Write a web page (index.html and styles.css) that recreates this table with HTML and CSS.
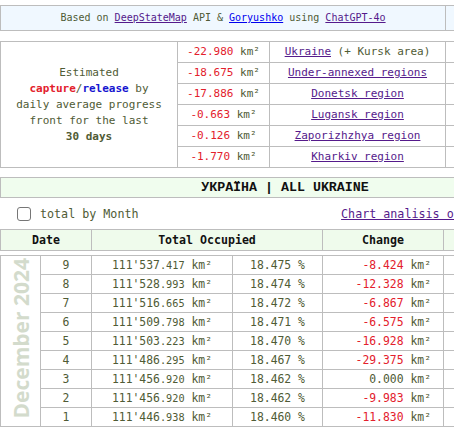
FILE: index.html
```html
<!DOCTYPE html>
<html lang="en">
<head>
<meta charset="utf-8">
<title>DeepStateMap progress</title>
<link rel="stylesheet" href="styles.css">
</head>
<body>
<div class="page">
  <table class="banner">
    <colgroup><col class="c-credit"><col></colgroup>
    <tr>
      <td class="credit">Based on <a class="visited" href="#">DeepStateMap</a> API &amp; <a class="fresh" href="#">Goryushko</a> using <a class="visited" href="#">ChatGPT-4o</a></td>
      <td></td>
    </tr>
  </table>

  <table class="summary">
    <colgroup><col class="c-desc"><col class="c-val"><col class="c-region"><col></colgroup>
    <tr>
      <td class="desc" rowspan="6">Estimated<br><b class="red">capture</b>/<b class="blue">release</b> by<br>daily average progress<br>front for the last<br><b>30 days</b></td>
      <td class="val"><span class="red">-22.980</span> km²</td>
      <td class="region"><a class="visited" href="#">Ukraine</a> (+ Kursk area)</td>
      <td></td>
    </tr>
    <tr><td class="val"><span class="red">-18.675</span> km²</td><td class="region"><a class="visited" href="#">Under-annexed regions</a></td><td></td></tr>
    <tr><td class="val"><span class="red">-17.886</span> km²</td><td class="region"><a class="visited" href="#">Donetsk region</a></td><td></td></tr>
    <tr><td class="val"><span class="red">-0.663</span> km²</td><td class="region"><a class="visited" href="#">Lugansk region</a></td><td></td></tr>
    <tr><td class="val"><span class="red">-0.126</span> km²</td><td class="region"><a class="visited" href="#">Zaporizhzhya region</a></td><td></td></tr>
    <tr><td class="val"><span class="red">-1.770</span> km²</td><td class="region"><a class="visited" href="#">Kharkiv region</a></td><td></td></tr>
  </table>

  <div class="title">УКРАЇНА | ALL UKRAINE</div>

  <div class="controls">
    <label class="toggle"><input type="checkbox" class="box"> total by Month</label>
    <a class="visited chart" href="#">Chart analisis of changes</a>
  </div>

  <table class="head">
    <colgroup><col class="c-date"><col class="c-total"><col class="c-change"><col></colgroup>
    <tr><th>Date</th><th>Total Occupied</th><th>Change</th><th></th></tr>
  </table>

  <table class="data">
    <colgroup><col class="c-month"><col class="c-day"><col class="c-km"><col class="c-pct"><col class="c-change"><col></colgroup>
    <tr>
      <td class="month" rowspan="9"><span>December 2024</span></td>
      <td class="day">9</td><td class="km">111'537<small>.417</small> km²</td><td class="pct">18.475 %</td><td class="chg"><span class="red">-8.424</span> km²</td><td></td>
    </tr>
    <tr><td class="day">8</td><td class="km">111'528<small>.993</small> km²</td><td class="pct">18.474 %</td><td class="chg"><span class="red">-12.328</span> km²</td><td></td></tr>
    <tr><td class="day">7</td><td class="km">111'516<small>.665</small> km²</td><td class="pct">18.472 %</td><td class="chg"><span class="red">-6.867</span> km²</td><td></td></tr>
    <tr><td class="day">6</td><td class="km">111'509<small>.798</small> km²</td><td class="pct">18.471 %</td><td class="chg"><span class="red">-6.575</span> km²</td><td></td></tr>
    <tr><td class="day">5</td><td class="km">111'503<small>.223</small> km²</td><td class="pct">18.470 %</td><td class="chg"><span class="red">-16.928</span> km²</td><td></td></tr>
    <tr><td class="day">4</td><td class="km">111'486<small>.295</small> km²</td><td class="pct">18.467 %</td><td class="chg"><span class="red">-29.375</span> km²</td><td></td></tr>
    <tr><td class="day">3</td><td class="km">111'456<small>.920</small> km²</td><td class="pct">18.462 %</td><td class="chg">0.000 km²</td><td></td></tr>
    <tr><td class="day">2</td><td class="km">111'456<small>.920</small> km²</td><td class="pct">18.462 %</td><td class="chg"><span class="red">-9.983</span> km²</td><td></td></tr>
    <tr><td class="day">1</td><td class="km">111'446<small>.938</small> km²</td><td class="pct">18.460 %</td><td class="chg"><span class="red">-11.830</span> km²</td><td></td></tr>
  </table>
</div>
</body>
</html>
```

FILE: styles.css
```css
html, body {
  overflow: hidden;
}
body {
  margin: 0;
  padding-top: 5px;
  font-family: "DejaVu Sans Mono", monospace;
  color: #4f5b35;
  background: #fff;
}
.page {
  width: 570px;
}
table {
  border-collapse: collapse;
  table-layout: fixed;
  width: 570px;
}
td, th {
  border: 1px solid #bdbdbd;
  padding: 0;
}
a.visited { color: #551a8b; }
a.fresh { color: #0000ee; }
.red { color: #e3202c; }
.blue { color: #1515d0; }

/* banner */
.banner { background: #f0f8ff; }
.c-credit { width: 445px; }
.credit {
  font-size: 10px;
  line-height: 24px;
  text-align: center;
}

/* summary */
.summary { margin-top: 10px; }
.c-desc { width: 177px; }
.c-val { width: 92px; }
.c-region { width: 176px; }
.summary td {
  font-size: 11px;
  line-height: 20px;
  text-align: center;
}
.summary td.desc {
  line-height: 16px;
}

/* title */
.title {
  margin-top: 9px;
  border: 1px solid #bdbdbd;
  background: #f0fdee;
  font-family: "Liberation Mono", monospace;
  font-weight: bold;
  font-size: 13.3px;
  line-height: 19px;
  text-align: center;
  color: #111;
}

/* controls */
.controls {
  display: flex;
  align-items: center;
  height: 31px;
  padding: 0 53px 0 17px;
  font-size: 11.7px;
}
.toggle {
  display: flex;
  align-items: center;
  gap: 9px;
}
.box {
  appearance: none;
  margin: 0;
  width: 14px;
  height: 14px;
  border: 1px solid #767676;
  border-radius: 3px;
  background: #fff;
}
.chart { margin-left: auto; }

/* header */
.head {
  background: #effbec;
}
.c-date { width: 91px; }
.c-total { width: 231px; }
.c-change { width: 121px; }
.head th {
  font-size: 11.6px;
  line-height: 20px;
  color: #111;
}

/* data */
.data { margin-top: 4px; }
.c-month { width: 40px; }
.c-day { width: 51px; }
.c-km { width: 141px; }
.c-pct { width: 90px; }
.data td {
  font-size: 11.4px;
  line-height: 18px;
  text-align: center;
}
.data td.chg {
  text-align: right;
  padding-right: 12px;
}
.data small { font-size: 0.9em; }
.data td.month {
  vertical-align: middle;
}
.month span {
  display: inline-block;
  writing-mode: vertical-rl;
  transform: rotate(180deg);
  font-family: "Open Sans", sans-serif;
  font-weight: 700;
  font-size: 21px;
  line-height: 20px;
  color: #d3dbcc;
}
```
